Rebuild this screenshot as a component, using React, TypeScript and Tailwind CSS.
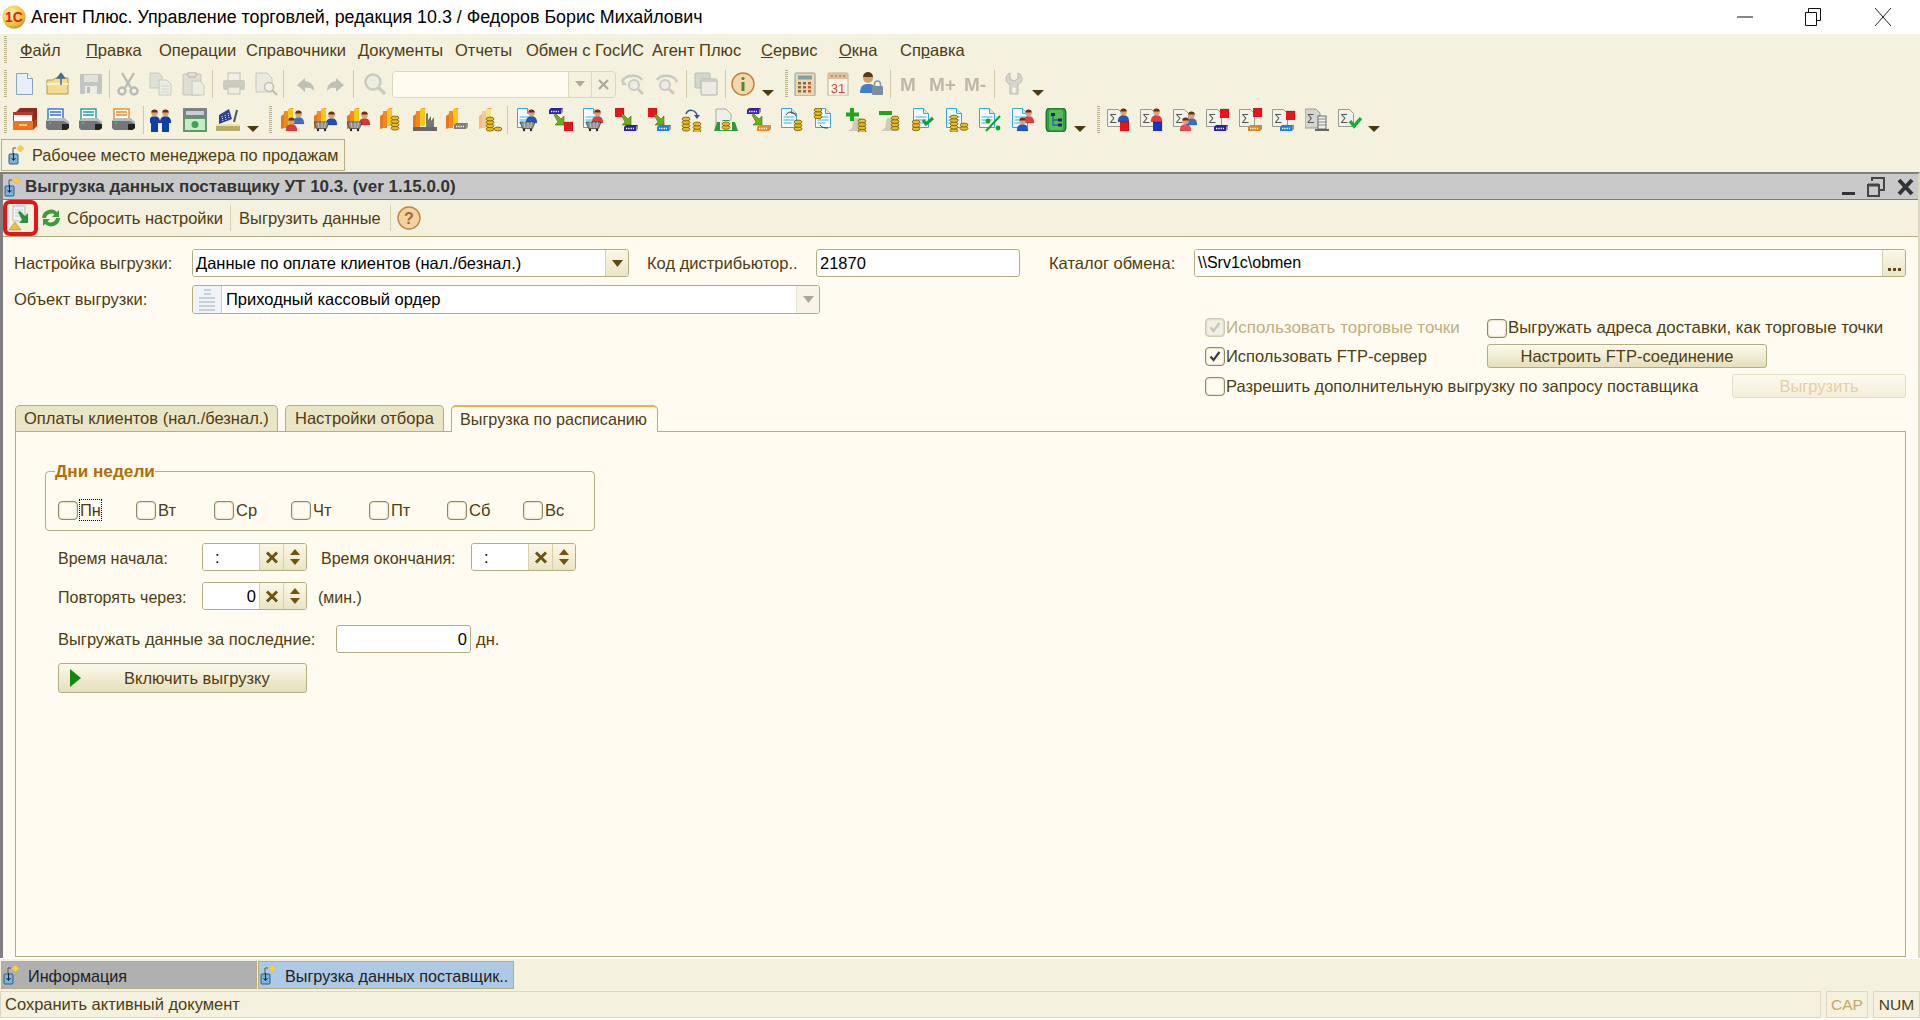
import React from "react";

type Kids = { children?: React.ReactNode; dim?: boolean };

const Ic = ({ children, dim }: Kids) => (
  <svg width="24" height="24" viewBox="0 0 24 24" className={dim ? "opacity-45 saturate-[0.35] blur-[0.4px]" : "blur-[0.2px]"}>
    {children}
  </svg>
);

const Person = ({ x, y, c }: { x: number; y: number; c: string }) => (
  <g transform={`translate(${x},${y})`}>
    <path d="M0 14c0-5 2-6 4-6.5h3C9 8 11 9 11 14z" fill={c} stroke="#00000040" strokeWidth=".5" />
    <circle cx="5.5" cy="4" r="3.2" fill="#dc9f78" />
    <path d="M2.3 3.6a3.2 3.2 0 0 1 6.4 0z" fill="#6b2f14" />
  </g>
);
const Stacks = ({ pale }: { pale?: boolean }) => (
  <g>
    <path d="M0 8l3-2v14l-3 1z" fill={pale ? "#f3b98a" : "#e9781c"} />
    <rect x="3" y="3" width="4" height="17" fill={pale ? "#f6c79b" : "#f08a1d"} />
    <rect x="7" y="1" width="5" height="17" fill={pale ? "#f7e38e" : "#f6c919"} />
    <path d="M7 1l3-1h3l-1 1z" fill="#f7a11c" />
  </g>
);
const Cart = ({ x = 0, y = 0 }: { x?: number; y?: number }) => (
  <g transform={`translate(${x},${y})`}>
    <path d="M0 0h15l-2.5 6.5h-10z" fill="#8a8f92" stroke="#333" strokeWidth=".7" />
    <path d="M4 0l1 6M8 0v6M11.5 0l-1 6" stroke="#e8e8e8" strokeWidth=".6" />
    <circle cx="4" cy="8" r="1.2" fill="#222" />
    <circle cx="11" cy="8" r="1.2" fill="#222" />
  </g>
);
const Coins = ({ x, y, n }: { x: number; y: number; n: number }) => (
  <g transform={`translate(${x},${y})`}>
    {Array.from({ length: n }).map((_, i) => (
      <ellipse key={i} cx="4" cy={(n - 1 - i) * 3.4 + 2} rx="4" ry="1.9" fill="#e7bb2c" stroke="#75580a" strokeWidth=".8" />
    ))}
  </g>
);
const Cube = ({ x, y, c, s = 9 }: { x: number; y: number; c: string; s?: number }) => (
  <g transform={`translate(${x},${y})`}>
    <rect width={s} height={s} fill={c} />
    <path d={`M0 0h${s}v${s}`} fill="none" stroke="#00000030" />
  </g>
);
const Device = ({ x, y, c }: { x: number; y: number; c: string }) => (
  <g transform={`translate(${x},${y})`}>
    <path d="M2 0h12l-2 2v4H0V2z" fill={c} />
    <path d="M2 3.5h8" stroke="#fff" strokeWidth="1.4" strokeDasharray="1.3 1" />
    <path d="M12 2l2-2v4l-2 2z" fill="#00000060" />
  </g>
);
const GArrow = ({ x, y }: { x: number; y: number }) => (
  <path transform={`translate(${x},${y})`} d="M0 1l2-1 5 5 3-3v9H1l3-3z" fill="#6eab1f" stroke="#4b6a10" strokeWidth=".6" />
);
const Doc = ({ lines = true, c = "#35a7e6" }: { lines?: boolean; c?: string }) => (
  <g>
    <path d="M1.5.5h10l5 5v14h-15z" fill="#f4fbff" stroke={c} />
    <path d="M11.5.5v5h5" fill="#d7e9f6" stroke={c} />
    {lines && <path d="M3.5 9h11M3.5 12h11M3.5 15h8" stroke="#34b4ea" strokeWidth="1.2" />}
  </g>
);
const Printer = ({ c }: { c: string }) => (
  <g>
    <rect x="2" y="1" width="15" height="11" fill="#fff" stroke={c} strokeWidth="1.4" />
    <path d="M4 4h11M4 7h11" stroke={c} strokeWidth="1.5" />
    <path d="M0 13l3-3h15l5 4v6l-2 2H2l-2-2z" fill="#73777a" />
    <path d="M0 13h18l5 3v-2l-5-4H3z" fill="#b9bdbf" />
    <path d="M16 16l7 0v4l-3 2H16z" fill="#222" />
    <path d="M3 15h2" stroke="#3fd04a" strokeWidth="1.4" />
  </g>
);
const SigmaDoc = () => (
  <g>
    <path d="M.5 1.5h11l4 4v13H.5z" fill="#f2f1ea" stroke="#9a9a94" />
    <text x="2.5" y="15" fontSize="12" fontFamily="'Liberation Sans',sans-serif" fill="#55554f">Σ</text>
  </g>
);

const icons: Record<string, React.ReactNode> = {
  doc: <g transform="translate(3,1)"><path d="M.5.5h11l5 5v16H.5z" fill="#e6f0fa" stroke="#8aa5bb" /><path d="M11.5.5v5h5" fill="#fff" stroke="#8aa5bb" /></g>,
  folder: <g><path d="M1 8h6l2-2h13v16H1z" fill="#f1dc92" stroke="#b2975a" /><path d="M1 12h21" stroke="#fdf2c4" strokeWidth="2" /><path d="M15 13V3m-3.5 3L15 1.5 18.5 6z" fill="#3a7ab0" stroke="#3a6f9a" strokeWidth="1.5" /></g>,
  save: <g><rect x="1" y="2" width="22" height="20" rx="1" fill="#7d95ae" /><rect x="5" y="3" width="14" height="7" fill="#c4d4e2" /><rect x="6" y="14" width="12" height="8" fill="#dfe7ee" /><rect x="8" y="15" width="3" height="6" fill="#6c819a" /></g>,
  cut: <g fill="none" stroke="#5f7fa4" strokeWidth="2.4"><path d="M6 1l9 15M18 1L9 16" /><circle cx="6" cy="19" r="3.5" /><circle cx="18" cy="19" r="3.5" /></g>,
  copy: <g><path d="M1 1h9l3 3v12H1z" fill="#bcd0e2" stroke="#7d9ab6" /><path d="M10 8h8l4 4v11H10z" fill="#dbe7f1" stroke="#7d9ab6" /><path d="M12 14h8M12 17h8M12 20h8" stroke="#9fb6cb" /></g>,
  paste: <g><rect x="1" y="2" width="18" height="21" rx="1" fill="#bfc9cf" stroke="#7d8d9a" /><rect x="6" y="0" width="8" height="5" rx="1" fill="#d6c99b" stroke="#867" /><path d="M10 9h8l4 4v10H10z" fill="#dbe7f1" stroke="#7d9ab6" /></g>,
  print: <g><rect x="6" y="1" width="12" height="8" fill="#eef" stroke="#888" /><rect x="1" y="8" width="22" height="10" rx="2" fill="#9a9fa4" /><rect x="6" y="15" width="12" height="7" fill="#e7e7ea" stroke="#888" /><circle cx="19" cy="11" r="1" fill="#5c5" /></g>,
  preview: <g><path d="M1 1h11l5 5v14H1z" fill="#d8e3ee" stroke="#7d9ab6" /><circle cx="14" cy="15" r="4.5" fill="#e9f1f7" stroke="#8a8a7e" strokeWidth="1.6" /><path d="M17 18l5 5" stroke="#a87e58" strokeWidth="2.4" /></g>,
  undo: <path d="M11 5L3 12l8 7v-4c4-1 7 0 9 3 0-6-3-9-9-10z" fill="#6d8f7d" transform="translate(0,1)" />,
  redo: <path d="M13 5l8 7-8 7v-4c-4-1-7 0-9 3 0-6 3-9 9-10z" fill="#6d8f7d" transform="translate(0,1)" />,
  search: <g><circle cx="10" cy="10" r="7.5" fill="#dde8f2" stroke="#8e9cab" strokeWidth="2.4" /><path d="M15.5 15.5L22 22" stroke="#a79a8e" strokeWidth="3.4" /></g>,
  prevS: <g><path d="M1 10c3-8 16-8 20-2" fill="none" stroke="#7fa0be" strokeWidth="2.6" /><path d="M1 7v6h5z" fill="#7fa0be" /><circle cx="13" cy="13" r="5" fill="#dde8f2" stroke="#8e9cab" strokeWidth="2" /><path d="M17 17l5 5" stroke="#a79a8e" strokeWidth="3" /></g>,
  nextS: <g><path d="M23 10C20 2 7 2 3 8" fill="none" stroke="#7fa0be" strokeWidth="2.6" /><circle cx="11" cy="13" r="5" fill="#dde8f2" stroke="#8e9cab" strokeWidth="2" /><path d="M15 17l5 5" stroke="#a79a8e" strokeWidth="3" /></g>,
  windows: <g><rect x="1" y="1" width="15" height="15" rx="1" fill="#9fb8d0" stroke="#6d8299" /><rect x="7" y="7" width="16" height="16" rx="1" fill="#dbe6f0" stroke="#54687c" /><rect x="7" y="7" width="16" height="3" fill="#8da4ba" /></g>,
  calc: <g><rect x="2" y="1" width="20" height="23" rx="1" fill="#e9d9b6" stroke="#88a0a8" /><rect x="5" y="3.5" width="14" height="4" fill="#7ca2a2" /><g fill="#8c6a3a"><rect x="5" y="10" width="3" height="2.5" /><rect x="10" y="10" width="3" height="2.5" /><rect x="15" y="10" width="3" height="2.5" fill="#c85a30" /><rect x="5" y="14" width="3" height="2.5" /><rect x="10" y="14" width="3" height="2.5" /><rect x="15" y="14" width="3" height="2.5" fill="#c85a30" /><rect x="5" y="18" width="3" height="2.5" /><rect x="10" y="18" width="3" height="2.5" /><rect x="15" y="18" width="3" height="2.5" fill="#c85a30" /></g></g>,
  cal: <g><rect x="2" y="1" width="20" height="23" rx="1" fill="#fbf6ea" stroke="#b9b09a" /><rect x="2" y="1" width="20" height="6" fill="#e3bf97" /><path d="M6 3v2M10 3v2M14 3v2M18 3v2" stroke="#865" /><text x="12" y="21" textAnchor="middle" fontSize="13" fontFamily="'Liberation Sans',sans-serif" fill="#e8432c">31</text></g>,
  lock: <g><circle cx="8" cy="6" r="5" fill="#d6a06a" /><path d="M3 5a5 5 0 0 1 10 0z" fill="#5a3a1c" /><path d="M0 21c0-7 3-9 8-9s7 2 7 5v4z" fill="#3f80c8" /><rect x="12" y="14" width="11" height="9" rx="1" fill="#7a8ea2" /><path d="M14.5 14v-2a3 3 0 0 1 6 0v2" fill="none" stroke="#8a9aaa" strokeWidth="1.6" /></g>,
  wrench: <g><path d="M8 1v6l4 2 4-2V1c3 1 4 4 4 6 0 3-2 5-4 5v10h-8V12c-2 0-4-2-4-5 0-2 1-5 4-6z" fill="#b3b7b8" stroke="#777" /><rect x="10.5" y="15" width="3" height="6" rx="1.5" fill="#fff" /></g>,
  cabinet: <g><path d="M3 4l4-4h17v13l-4 4z" fill="#8c2a22" /><rect x="0" y="4" width="20" height="9" fill="#b83a2a" /><rect x="1" y="7" width="18" height="6" fill="#fff" /><rect x="0" y="13" width="20" height="9" fill="#f0741e" /><rect x="6" y="16" width="8" height="2" fill="#ffd27a" /><path d="M20 13l4-2v7l-4 4z" fill="#a84a18" /></g>,
  p1: <Printer c="#2a6fe0" />,
  p2: <Printer c="#1f9aa0" />,
  p3: <Printer c="#f0882a" />,
  men: <g><Person x={-1} y={1} c="#0f3fa8" /><Person x={10} y={1} c="#0f3fa8" /><rect x="1" y="15" width="7" height="9" fill="#0f3fa8" /><rect x="12" y="15" width="7" height="9" fill="#0f3fa8" /></g>,
  cash: <g><rect x="0" y="0" width="24" height="9" fill="#7a8286" /><rect x="3" y="3" width="18" height="4" fill="#c9ced2" /><rect x="0" y="9" width="24" height="15" fill="#5d9a6a" /><rect x="2" y="11" width="20" height="11" fill="#c6ecc5" /><circle cx="12" cy="16.5" r="3.5" fill="#41a15a" /></g>,
  reg: <g><path d="M3 7l10-6 3 10-13 5z" fill="#2c3f94" /><path d="M6 8l1 5M9 7l1 5M12 5l1 5" stroke="#fff" strokeDasharray="1 1" /><path d="M0 17h24v6H0z" fill="#b5ae66" /><path d="M0 17h24" stroke="#ece5a6" strokeWidth="2" /><path d="M18 14l3-12" stroke="#556" strokeWidth="2" /></g>,
  a1: <g><Stacks /><Person x={12} y={2} c="#3a6fc8" /><Person x={5} y={9} c="#e03a40" /></g>,
  a2: <g><Stacks /><Person x={12} y={3} c="#1f4fbc" /><Cart x={0} y={14} /></g>,
  a3: <g><Stacks /><Person x={12} y={3} c="#dd3236" /><Cart x={0} y={14} /></g>,
  a4: <g><Stacks /><Coins x={11} y={8} n={4} /></g>,
  a5: <g><Stacks /><path d="M13 22V6l2-1v7l3-4v5l3-4v13z" fill="#777" /><path d="M0 19h24v4H0z" fill="#666" /></g>,
  a6: <g><Stacks /><Device x={8} y={15} c="#7d7d7d" /></g>,
  a7: <g><Stacks pale /><Coins x={7} y={9} n={4} /><Coins x={15} y={19} n={1} /></g>,
  d1: <g><Doc /><Person x={10} y={1} c="#2158c0" /><Cart x={4} y={14} /></g>,
  d2: <g><Device x={0} y={0} c="#2a1fa8" /><GArrow x={5} y={6} /><Cube x={15} y={14} c="#e8141c" /></g>,
  d3: <g><Doc /><Person x={10} y={1} c="#e53a40" /><Cart x={4} y={14} /></g>,
  d4: <g><Cube x={0} y={0} c="#e8141c" /><GArrow x={6} y={6} /><Device x={9} y={17} c="#2a1fa8" /></g>,
  d5: <g><Cube x={0} y={0} c="#e8141c" /><GArrow x={6} y={6} /><Device x={9} y={17} c="#1f7de8" /></g>,
  e1: <g><Coins x={1} y={9} n={4} /><Coins x={12} y={14} n={3} /><path d="M5 6c2-5 9-5 11 1" fill="none" stroke="#2f5a7a" strokeWidth="1.5" /><path d="M13 7h6l-3 4z" fill="#2f5a7a" /></g>,
  e2: <g><path d="M2 1h10l5 5v14H2z" fill="#eeeeea" stroke="#a9a9a4" /><path d="M0 23l3-9h4l2-2h6l2 2h4l3 9z" fill="#2a9a3a" /><rect x="6" y="13" width="12" height="9" fill="#f4f0df" /><Coins x={8} y={14} n={2} /></g>,
  e3: <g><Device x={0} y={0} c="#3a1fa8" /><GArrow x={5} y={6} /><Device x={10} y={17} c="#f0882a" /></g>,
  e4: <g><Doc /><path d="M6 7c2-4 8-4 10 1" fill="none" stroke="#335" /><Coins x={14} y={12} n={3} /></g>,
  e5: <g transform="translate(1,0)"><Doc /><Coins x={0} y={0} n={3} /><path d="M6 17c2 3 5 3 8 3" fill="none" stroke="#335" /></g>,
  plus: <g><path d="M8 10h8l4 4v9H2l4-3z" fill="#cfcabb" /><rect x="4" y="0" width="4" height="13" fill="#22a31c" /><rect x="0" y="4.5" width="13" height="4" fill="#22a31c" /><Coins x={12} y={11} n={4} /></g>,
  minus: <g><path d="M8 10h8l4 4v9H2l4-3z" fill="#cfcabb" /><rect x="0" y="3" width="13" height="4" fill="#22a31c" /><Coins x={12} y={8} n={4} /></g>,
  check: <g><Doc /><Coins x={0} y={12} n={3} /><path d="M11 12l3 4 7-6" fill="none" stroke="#14a02e" strokeWidth="3" /></g>,
  dc: <g><Doc /><Coins x={5} y={7} n={5} /><Coins x={15} y={15} n={2} /></g>,
  pct: <g><Doc /><path d="M8 23L22 8" stroke="#14a02e" strokeWidth="2" /><circle cx="10" cy="13" r="2.4" fill="#14a02e" /><circle cx="20" cy="20" r="2.4" fill="#14a02e" /></g>,
  dp: <g><Doc /><Person x={12} y={1} c="#e53a40" /><Person x={6} y={9} c="#2158c0" /></g>,
  tree: <g><rect x="2" y="0" width="20" height="24" rx="4" fill="#2c9a3e" stroke="#1d6e2c" /><rect x="5" y="2" width="14" height="20" rx="2" fill="#57bd5a" /><path d="M9 7v10h5M9 12h5" fill="none" stroke="#1d6e9c" strokeWidth="1.4" /><rect x="7" y="5" width="4" height="3" fill="#226" /><rect x="14" y="10.5" width="4" height="3" fill="#226" /><rect x="14" y="15.5" width="4" height="3" fill="#226" /></g>,
  s1: <g><SigmaDoc /><Person x={11} y={0} c="#2158c0" /><Cube x={13} y={14} c="#e8141c" /></g>,
  s2: <g><SigmaDoc /><Person x={11} y={0} c="#e53a40" /><Cube x={13} y={14} c="#1a32c8" /></g>,
  s3: <g><SigmaDoc /><Person x={13} y={3} c="#3a6fc8" /><Person x={7} y={9} c="#ef4a50" /></g>,
  s4: <g><SigmaDoc /><Cube x={14} y={1} c="#e8141c" /><Device x={8} y={17} c="#2a1fa8" /></g>,
  s5: <g><SigmaDoc /><Cube x={14} y={0} c="#e8141c" /><Device x={9} y={17} c="#d88a1c" /></g>,
  s6: <g><SigmaDoc /><Cube x={14} y={3} c="#e8141c" /><Device x={8} y={17} c="#1f7de8" /></g>,
  s7: <g><path d="M0 1h11l4 4v15H0z" fill="#d4d4d0" stroke="#9a9a94" /><text x="2" y="15" fontSize="12" fontFamily="'Liberation Sans',sans-serif" fill="#55554f">Σ</text><rect x="13" y="8" width="8" height="13" fill="#efefea" stroke="#666" /><path d="M13 11h8M13 14h8M13 17h8" stroke="#888" /><path d="M10 21h14v2H10z" fill="#666" /></g>,
  s8: <g><SigmaDoc /><path d="M12 13l4 5 7-8" fill="none" stroke="#14b02e" strokeWidth="3.4" /></g>,
};

const Btn = ({ i, dim }: { i: string; dim?: boolean }) => (
  <div className="w-[33px] h-[28px] flex items-center justify-center shrink-0">
    <Ic dim={dim}>{icons[i]}</Ic>
  </div>
);
const Sep = () => <div className="w-px h-[28px] bg-[#cfc9a8] shrink-0" />;
const Grip = () => (
  <div className="w-[3px] h-[28px] shrink-0 bg-[repeating-linear-gradient(to_bottom,#b7b08a_0,#b7b08a_1px,transparent_1px,transparent_2px)]" />
);
const DownArrow = () => (
  <div className="w-[12px] h-[28px] shrink-0 flex items-end pb-[2px]">
    <svg width="12" height="6" viewBox="0 0 12 6"><path d="M0 0h12L6 6z" fill="#4a3a12" /></svg>
  </div>
);
const Mem = ({ t }: { t: string }) => (
  <span className="text-[19px] font-bold text-[#bdb7ab] leading-none blur-[0.4px]">{t}</span>
);

const FormIcon = () => (
  <svg width="20" height="22" viewBox="0 0 20 22">
    <path d="M12.5 1l3.5 3.5L12.5 8 9 4.5z" fill="#f7d23e" stroke="#e9b81c" strokeWidth=".5" />
    <path d="M5 7V4h3M5 7v3" fill="none" stroke="#555" />
    <rect x="1" y="10" width="9" height="10" rx="1" fill="#7db2d9" stroke="#2e5a80" />
    <path d="M5.5 9v7m-2-2l2 2.5 2-2.5" fill="none" stroke="#10263a" />
  </svg>
);

const Check = ({ on, off }: { on?: boolean; off?: boolean }) => (
  <span className={`w-[20px] h-[19px] shrink-0 rounded-[4px] border flex items-center justify-center shadow-[inset_0_0_2px_#b5ad82] ${off ? "border-[#cfc9b4] bg-[#f2efe4]" : "border-[#8d8767] bg-[#fffbf0]"}`}>
    {(on || off) && (
      <svg width="12" height="11" viewBox="0 0 12 11">
        <path d="M1.5 5.5l3 3.5 6-8" fill="none" stroke={off ? "#c6c2b4" : "#3c3c3c"} strokeWidth="2.2" />
      </svg>
    )}
  </span>
);

const Gbtn = "bg-gradient-to-b from-[#fcf9ea] to-[#e6dfbc] border border-[#b5ad82]";
const FieldBtn = "bg-gradient-to-b from-[#faf7e6] to-[#ebe5c6]";

const ClearBtn = () => (
  <div className={`w-[24px] h-full border-l border-[#d6d0ae] flex items-center justify-center ${FieldBtn}`}>
    <svg width="14" height="13" viewBox="0 0 14 13"><path d="M2 1.5l10 10M12 1.5l-10 10" stroke="#6e5410" strokeWidth="3" /></svg>
  </div>
);
const Spin = () => (
  <div className={`w-[23px] h-full border-l border-[#d6d0ae] flex flex-col items-center justify-center gap-[4px] ${FieldBtn}`}>
    <svg width="10" height="6" viewBox="0 0 10 6"><path d="M5 0l5 6H0z" fill="#6e5410" /></svg>
    <svg width="10" height="6" viewBox="0 0 10 6"><path d="M0 0h10L5 6z" fill="#6e5410" /></svg>
  </div>
);
const TimeField = ({ v, right }: { v: string; right?: boolean }) => (
  <div className="w-[105px] h-full flex rounded-[3px] border border-[#b5ad82] overflow-hidden shrink-0">
    <div className={`flex-1 bg-white text-black flex items-center ${right ? "justify-end pr-[3px]" : "pl-[12px]"}`}>{v}</div>
    <ClearBtn />
    <Spin />
  </div>
);

const Day = ({ t, w, focus }: { t: string; w: string; focus?: boolean }) => (
  <div className={`flex items-center shrink-0 ${w}`}>
    <Check />
    <span className={`ml-[1px] h-[22px] flex items-center ${focus ? "border border-dotted border-black" : "border border-transparent"}`}>{t}</span>
  </div>
);

export default function App() {
  return (
    <div className="w-[1920px] h-[1020px] overflow-hidden flex flex-col bg-white text-[16.5px] leading-none text-[#4d3d12] font-['Liberation_Sans',sans-serif]">
      {/* Window caption */}
      <div className="h-[34px] shrink-0 flex items-center bg-white text-black">
        <svg width="24" height="24" viewBox="0 0 24 24" className="ml-[2px] shrink-0">
          <defs>
            <radialGradient id="lg" cx="40%" cy="35%" r="70%">
              <stop offset="0%" stopColor="#fff2b0" />
              <stop offset="70%" stopColor="#f7c23c" />
              <stop offset="100%" stopColor="#c98a20" />
            </radialGradient>
          </defs>
          <circle cx="12" cy="12" r="11.5" fill="url(#lg)" />
          <text x="12" y="17" textAnchor="middle" fontSize="14" fontWeight="700" fill="#d8231c" fontFamily="'Liberation Sans',sans-serif">1С</text>
        </svg>
        <span className="ml-[5px] pt-[2px] text-[17.85px] whitespace-nowrap">Агент Плюс. Управление торговлей, редакция 10.3 / Федоров Борис Михайлович</span>
        <div className="flex-1" />
        <svg width="16" height="2" viewBox="0 0 16 2" className="mr-[52px]"><path d="M0 1h16" stroke="#111" /></svg>
        <svg width="16" height="18" viewBox="0 0 16 18" className="mr-[54px]"><path d="M.5 4.5h11v13H.5zM3.5 4.5v-4h12v12h-4" fill="none" stroke="#111" /></svg>
        <svg width="16" height="18" viewBox="0 0 16 18" className="mr-[29px]"><path d="M0 0l16 18M16 0L0 18" stroke="#222" /></svg>
      </div>

      {/* App chrome */}
      <div className="h-[138px] shrink-0 bg-[#f4f1de] flex flex-col">
        <div className="h-[32px] flex items-center pl-[4px]">
          <Grip />
          <div className="ml-[13px] w-[66px] shrink-0"><u>Ф</u>айл</div>
          <div className="w-[73px] shrink-0"><u>П</u>равка</div>
          <div className="w-[87px] shrink-0">Операции</div>
          <div className="w-[112px] shrink-0">Справочники</div>
          <div className="w-[97px] shrink-0">Документы</div>
          <div className="w-[71px] shrink-0">Отчеты</div>
          <div className="w-[126px] shrink-0">Обмен с ГосИС</div>
          <div className="w-[109px] shrink-0">Агент Плюс</div>
          <div className="w-[78px] shrink-0"><u>С</u>ервис</div>
          <div className="w-[61px] shrink-0"><u>О</u>кна</div>
          <div>Сп<u>р</u>авка</div>
        </div>

        <div className="h-[30px] mt-[3px] flex items-center pl-[4px]">
          <Grip />
          <div className="ml-[1px] flex"><Btn i="doc" /><Btn i="folder" /><Btn i="save" dim /></div>
          <div className="ml-[2px]"><Sep /></div>
          <div className="ml-[1px] flex"><Btn i="cut" dim /><Btn i="copy" dim /><Btn i="paste" dim /></div>
          <div className="ml-[2px]"><Sep /></div>
          <div className="ml-[4px] flex"><Btn i="print" dim /><Btn i="preview" dim /></div>
          <div><Sep /></div>
          <div className="ml-[8px] w-[28px] flex justify-center"><Btn i="undo" dim /></div>
          <div className="w-[30px] flex justify-center"><Btn i="redo" dim /></div>
          <div className="ml-[3px]"><Sep /></div>
          <div className="ml-[4px]"><Btn i="search" dim /></div>
          <div className="ml-[1px] w-[224px] h-[27px] shrink-0 rounded-[4px] border border-[#dcd8bf] flex overflow-hidden">
            <div className="flex-1 bg-[#fffbf0]" />
            <div className="w-[23px] border-l border-[#dcd8bf] flex items-center justify-center">
              <svg width="10" height="6" viewBox="0 0 10 6"><path d="M0 0h10L5 6z" fill="#b0ab95" /></svg>
            </div>
            <div className="w-[24px] border-l border-[#dcd8bf] flex items-center justify-center">
              <svg width="11" height="11" viewBox="0 0 11 11"><path d="M1 1l9 9M10 1l-9 9" stroke="#a8a59a" strokeWidth="2" /></svg>
            </div>
          </div>
          <div><Btn i="prevS" dim /></div>
          <Btn i="nextS" dim />
          <div className="ml-[4px]"><Sep /></div>
          <div className="ml-[2px]"><Btn i="windows" dim /></div>
          <div className="ml-[3px]"><Sep /></div>
          <div className="ml-[5px]">
            <svg width="24" height="24" viewBox="0 0 24 24" className="blur-[0.2px]">
              <circle cx="12" cy="12" r="11" fill="#f3d7ae" stroke="#c0803c" strokeWidth="1.4" />
              <circle cx="12" cy="6.5" r="1.6" fill="#4f8a2e" />
              <rect x="10.5" y="10" width="3" height="9" fill="#4f8a2e" />
            </svg>
          </div>
          <div className="ml-[7px]"><DownArrow /></div>
          <div className="ml-[11px]"><Grip /></div>
          <div className="ml-[0px]"><Btn i="calc" /></div>
          <Btn i="cal" />
          <div className="ml-[1px]"><Btn i="lock" /></div>
          <div className="ml-[2px]"><Sep /></div>
          <div className="ml-[9px] w-[16px] shrink-0"><Mem t="M" /></div>
          <div className="ml-[13px] w-[26px] shrink-0"><Mem t="M+" /></div>
          <div className="ml-[9px] w-[24px] shrink-0"><Mem t="M-" /></div>
          <div className="ml-[6px]"><Sep /></div>
          <div className="ml-[2px]"><Btn i="wrench" dim /></div>
          <div className="ml-[2px]"><DownArrow /></div>
        </div>

        <div className="h-[30px] mt-[6px] flex items-center pl-[4px]">
          <Grip />
          <div className="ml-[1px] flex"><Btn i="cabinet" /><Btn i="p1" /><Btn i="p2" /><Btn i="p3" /></div>
          <div className="ml-[3px]"><Sep /></div>
          <div className="ml-[1px] flex"><Btn i="men" /><Btn i="cash" /><Btn i="reg" /></div>
          <div className="ml-[3px]"><DownArrow /></div>
          <div className="ml-[10px]"><Grip /></div>
          <div className="ml-[4px] flex">
            {["a1", "a2", "a3", "a4", "a5", "a6", "a7"].map((k) => <Btn key={k} i={k} />)}
          </div>
          <div><Sep /></div>
          <div className="ml-[3px] flex">
            {["d1", "d2", "d3", "d4", "d5", "e1", "e2", "e3", "e4", "e5", "plus", "minus", "check", "dc", "pct", "dp", "tree"].map((k) => <Btn key={k} i={k} />)}
          </div>
          <div className="ml-[2px]"><DownArrow /></div>
          <div className="ml-[11px]"><Grip /></div>
          <div className="ml-[2px] flex">
            {["s1", "s2", "s3", "s4", "s5", "s6", "s7", "s8"].map((k) => <Btn key={k} i={k} />)}
          </div>
          <div className="ml-[2px]"><DownArrow /></div>
        </div>

        <div className="h-[32px] w-[344px] mt-[4px] ml-[1px] shrink-0 border border-[#b5ad82] flex items-center pl-[6px]">
          <FormIcon />
          <span className="ml-[4px] whitespace-nowrap text-[16.3px]">Рабочее место менеджера по продажам</span>
        </div>
      </div>

      {/* Document window */}
      <div className="h-[786px] shrink-0 border-t-2 border-t-[#808080] border-l-[3px] border-l-[#808080] border-r-2 border-r-[#dcd8c2] flex flex-col bg-[#fffbf0]">
        <div className="h-[26px] shrink-0 bg-[#c9c9c9] border-b border-b-[#7c7c7c] flex items-center pl-[1px] pr-[4px] text-[17px] text-[#333] font-bold">
          <FormIcon />
          <span className="ml-[1px]">Выгрузка данных поставщику УТ 10.3. (ver 1.15.0.0)</span>
          <div className="flex-1" />
          <svg width="13" height="3" viewBox="0 0 13 3" className="self-end mb-[4px] mr-[12px]"><rect width="13" height="3" fill="#333" /></svg>
          <svg width="18" height="20" viewBox="0 0 18 20" className="mr-[12px]"><path d="M1 8h11v11H1zM5 4V1h12v12h-4" fill="none" stroke="#444" strokeWidth="2" /><path d="M1 8h11" stroke="#444" strokeWidth="3" /></svg>
          <svg width="17" height="18" viewBox="0 0 17 18"><path d="M2 2l13 14M15 2L2 16" stroke="#333" strokeWidth="4" /></svg>
        </div>

        <div className="h-[37px] shrink-0 bg-[#f4f1de] border-b border-b-[#b5ad82] flex items-center">
          <div className="w-[35px] h-[36px] shrink-0 rounded-[7px] border-[4px] border-[#e4141c] flex items-center justify-center">
            <svg width="24" height="26" viewBox="0 0 24 26">
              <path d="M4 1h12v15H4z" fill="#eef2f4" stroke="#b0bec8" />
              <path d="M6 5h8M6 8h8M6 11h8" stroke="#c4ccd2" />
              <path d="M0 25l6-8 6 8z" fill="#e9bf4a" stroke="#b38a1e" strokeWidth=".6" />
              <path d="M9 7l2-1 5 5 3-3v10h-9l3-3z" fill="#2f8f3a" />
            </svg>
          </div>
          <svg width="22" height="20" viewBox="0 0 22 20" className="ml-[2px]">
            <path d="M2 10a9 9 0 0 1 15-6l2-2v7h-7l2.5-2.5A5.5 5.5 0 0 0 6 10z" fill="#3f9b3f" />
            <path d="M20 10a9 9 0 0 1-15 6l-2 2v-7h7l-2.5 2.5A5.5 5.5 0 0 0 16 10z" fill="#3f9b3f" />
          </svg>
          <span className="ml-[5px]">Сбросить настройки</span>
          <div className="ml-[7px] w-px h-[26px] bg-[#d6d0ae]" />
          <span className="ml-[8px]">Выгрузить данные</span>
          <div className="ml-[9px] w-px h-[26px] bg-[#d6d0ae]" />
          <svg width="24" height="24" viewBox="0 0 24 24" className="ml-[6px]">
            <circle cx="12" cy="12" r="11" fill="#f3d3a2" stroke="#c0843c" strokeWidth="1.4" />
            <text x="12" y="18" textAnchor="middle" fontSize="16" fontWeight="700" fill="#9a6a3a" fontFamily="'Liberation Sans',sans-serif">?</text>
          </svg>
        </div>

        <div className="flex-1 min-h-0 flex flex-col pl-[12px] pr-[12px] pb-[1px]">
          {/* Row 1 */}
          <div className="h-[28px] mt-[12px] flex items-center shrink-0">
            <span className="ml-[-1px] w-[178px] shrink-0">Настройка выгрузки:</span>
            <div className="w-[437px] h-full shrink-0 rounded-[3px] border border-[#b5ad82] flex overflow-hidden">
              <div className="flex-1 bg-white text-black flex items-center pl-[3px]">Данные по оплате клиентов (нал./безнал.)</div>
              <div className={`w-[23px] border-l border-[#d6d0ae] flex items-center justify-center ${FieldBtn}`}>
                <svg width="11" height="7" viewBox="0 0 11 7"><path d="M0 0h11L5.5 7z" fill="#5e4a12" /></svg>
              </div>
            </div>
            <span className="ml-[18px] w-[169px] shrink-0 whitespace-nowrap">Код дистрибьютор..</span>
            <div className="w-[204px] h-full shrink-0 rounded-[3px] border border-[#b5ad82] bg-white text-black flex items-center pl-[3px]">21870</div>
            <span className="ml-[29px] w-[145px] shrink-0">Каталог обмена:</span>
            <div className="flex-1 h-full rounded-[3px] border border-[#b5ad82] flex overflow-hidden">
              <div className="flex-1 bg-white text-black flex items-center pl-[3px] text-[16px]">\\Srv1c\obmen</div>
              <div className={`w-[23px] border-l border-[#d6d0ae] flex items-end justify-center pb-[5px] ${FieldBtn}`}>
                <svg width="13" height="3" viewBox="0 0 13 3" fill="#5e4a12"><rect width="3" height="3" /><rect x="5" width="3" height="3" /><rect x="10" width="3" height="3" /></svg>
              </div>
            </div>
          </div>
          {/* Row 2 */}
          <div className="h-[29px] mt-[8px] flex items-center shrink-0">
            <span className="ml-[-1px] w-[178px] shrink-0">Объект выгрузки:</span>
            <div className="w-[628px] h-full shrink-0 rounded-[3px] border border-[#b5ad82] flex overflow-hidden">
              <div className="w-[29px] bg-[#f0f4f8] border-r border-[#c6cdd4] flex items-center justify-center">
                <svg width="18" height="26" viewBox="0 0 18 26"><path d="M6 3h7M6 7h7M1 11h16M1 15h16M1 19h16M1 23h16" stroke="#c9d0d8" strokeWidth="2" /></svg>
              </div>
              <div className="flex-1 bg-white text-black flex items-center pl-[4px]">Приходный кассовый ордер</div>
              <div className="w-[23px] border-l border-[#e6e2cc] bg-[#f7f5e8] flex items-center justify-center">
                <svg width="11" height="7" viewBox="0 0 11 7"><path d="M0 0h11L5.5 7z" fill="#aca792" /></svg>
              </div>
            </div>
          </div>

          {/* Options */}
          <div className="mt-[4px] h-[21px] flex shrink-0 pl-[1190px]">
            <div className="w-[282px] shrink-0 flex items-start">
              <Check off />
              <span className="ml-[1px] h-[19px] flex items-center text-[#c3ae80] text-[17px] whitespace-nowrap">Использовать торговые точки</span>
            </div>
            <div className="flex items-center">
              <Check />
              <span className="ml-[1px] text-[16.8px] whitespace-nowrap">Выгружать адреса доставки, как торговые точки</span>
            </div>
          </div>
          <div className="mt-[5px] h-[24px] flex items-center shrink-0 pl-[1190px]">
            <div className="w-[282px] shrink-0 flex items-center">
              <Check on />
              <span className="ml-[1px]">Использовать FTP-сервер</span>
            </div>
            <div className={`w-[280px] h-full rounded-[3px] flex items-center justify-center ${Gbtn}`}>Настроить FTP-соединение</div>
          </div>
          <div className="mt-[6px] h-[24px] flex items-center shrink-0 pl-[1190px]">
            <div className="w-[527px] shrink-0 flex items-center">
              <Check />
              <span className="ml-[1px] whitespace-nowrap">Разрешить дополнительную выгрузку по запросу поставщика</span>
            </div>
            <div className="flex-1 h-full rounded-[3px] border border-[#e2ddc6] bg-gradient-to-b from-[#fdfbef] to-[#f3efdc] text-[#e8cda6] flex items-center justify-center">Выгрузить</div>
          </div>

          {/* Tabs */}
          <div className="mt-[7px] h-[26px] flex shrink-0 items-end">
            <div className="w-[263px] h-[26px] rounded-t-[5px] border border-[#b5ad82] border-b-0 bg-[#ebe5c8] flex items-center pl-[8px] whitespace-nowrap">Оплаты клиентов (нал./безнал.)</div>
            <div className="ml-[7px] w-[159px] h-[26px] rounded-t-[5px] border border-[#b5ad82] border-b-0 bg-[#ebe5c8] flex items-center pl-[9px] whitespace-nowrap">Настройки отбора</div>
            <div className="ml-[7px] w-[207px] h-[27px] mb-[-1px] z-10 rounded-t-[5px] border border-[#b5ad82] border-t-2 border-t-[#e8b44c] border-b-0 bg-[#fffbf0] flex items-center pl-[8px] whitespace-nowrap text-[16.2px]">Выгрузка по расписанию</div>
          </div>
          <div className="flex-1 min-h-0 border border-[#b5ad82] pl-[29px] pt-[30px]">
            <fieldset className="w-[550px] h-[69px] rounded-[4px] border border-[#b5ad82] pl-[12px] m-0">
              <legend className="ml-[-3px] p-0 h-[18px] leading-[18px] text-[17.2px] font-bold text-[#b36e08]">Дни недели</legend>
              <div className="flex mt-[19px]">
                <Day t="Пн" w="w-[78px]" focus />
                <Day t="Вт" w="w-[78px]" />
                <Day t="Ср" w="w-[77px]" />
                <Day t="Чт" w="w-[78px]" />
                <Day t="Пт" w="w-[78px]" />
                <Day t="Сб" w="w-[76px]" />
                <Day t="Вс" w="w-[60px]" />
              </div>
            </fieldset>
            <div className="mt-[12px] ml-[13px] h-[28px] flex items-center">
              <span className="w-[144px] shrink-0 text-[16px] pt-[3px]">Время начала:</span>
              <TimeField v=":" />
              <span className="ml-[14px] w-[150px] shrink-0 whitespace-nowrap text-[16px] pt-[3px]">Время окончания:</span>
              <TimeField v=":" />
            </div>
            <div className="mt-[11px] ml-[13px] h-[28px] flex items-center">
              <span className="w-[144px] shrink-0 whitespace-nowrap text-[16px] pt-[3px]">Повторять через:</span>
              <TimeField v="0" right />
              <span className="ml-[11px] text-[16px] pt-[3px]">(мин.)</span>
            </div>
            <div className="mt-[15px] ml-[13px] h-[28px] flex items-center">
              <span className="w-[278px] shrink-0 whitespace-nowrap">Выгружать данные за последние:</span>
              <div className="w-[135px] h-full rounded-[3px] border border-[#b5ad82] bg-white text-black flex items-center justify-end pr-[3px]">0</div>
              <span className="ml-[5px]">дн.</span>
            </div>
            <div className={`mt-[10px] ml-[13px] w-[249px] h-[30px] rounded-[3px] flex items-center pl-[11px] ${Gbtn}`}>
              <svg width="11" height="18" viewBox="0 0 11 18"><path d="M0 0l11 9-11 9z" fill="#0f8a0f" /></svg>
              <span className="ml-[43px]">Включить выгрузку</span>
            </div>
          </div>
        </div>
      </div>

      {/* Window tabs */}
      <div className="h-[33px] shrink-0 bg-[#f4f1de] border-t border-white flex items-start pt-[2px] pl-[1px] text-[16.2px]">
        <div className="w-[256px] h-[28px] border border-[#b5ad82] bg-[#b0b0b0] flex items-center pl-[1px] text-[#222]">
          <FormIcon />
          <span className="ml-[5px] pt-[2px]">Информация</span>
        </div>
        <div className="ml-[1px] w-[256px] h-[28px] border border-[#b5ad82] bg-[#aec9e4] flex items-center pl-[1px] text-[#222]">
          <FormIcon />
          <span className="ml-[5px] pt-[2px] whitespace-nowrap">Выгрузка данных поставщик..</span>
        </div>
      </div>

      {/* Status bar */}
      <div className="h-[27px] shrink-0 bg-[#f4f1de] flex">
        <div className="w-[1821px] border border-[#dcd8c2] flex items-center pl-[4px]">Сохранить активный документ</div>
        <div className="ml-[5px] w-[42px] border border-[#dcd8c2] flex items-center justify-center text-[15.5px] text-[#c4a868]">CAP</div>
        <div className="ml-[5px] flex-1 border border-[#dcd8c2] flex items-center justify-center text-[15.5px]">NUM</div>
      </div>
    </div>
  );
}
